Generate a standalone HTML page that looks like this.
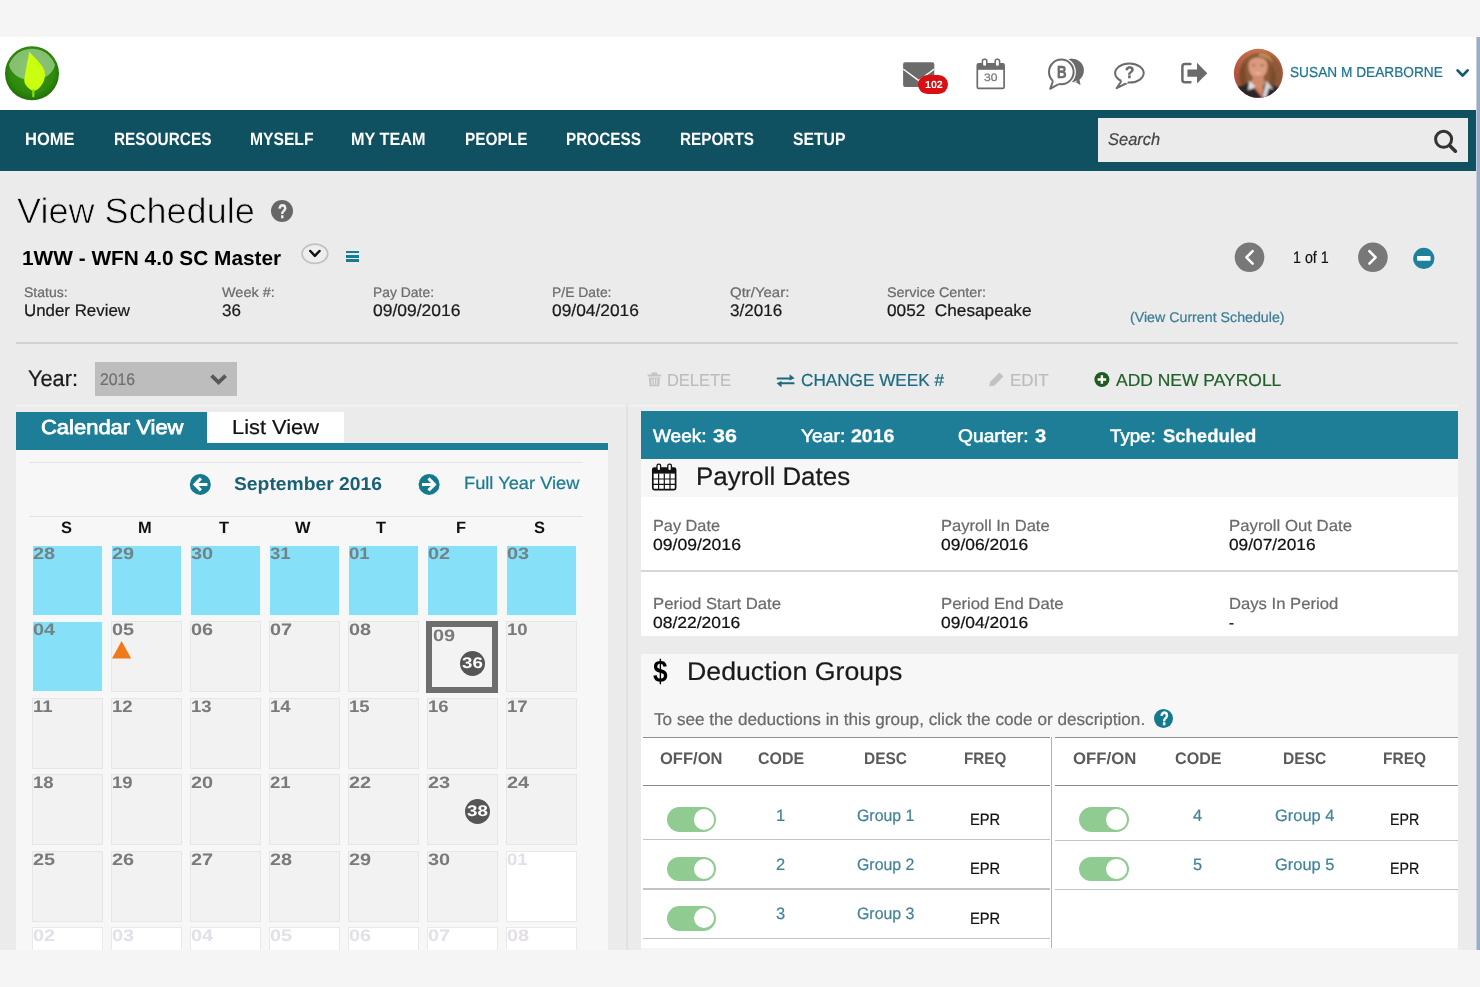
<!DOCTYPE html>
<html><head><meta charset="utf-8"><title>View Schedule</title>
<style>
html,body{margin:0;padding:0;}
body{width:1480px;height:987px;overflow:hidden;background:#f5f5f5;position:relative;font-family:"Liberation Sans",sans-serif;}
#p div,#p span,#p svg{position:absolute;}
#p span{white-space:pre;line-height:1;transform-origin:0 0;display:block;text-rendering:geometricPrecision;}
#p{position:absolute;left:0;top:0;width:1480px;height:987px;overflow:hidden;}
</style></head><body><div id="p">
<div style="left:0.0px;top:37.0px;width:1476.0px;height:72.5px;background:#ffffff;"></div>
<div style="left:0.0px;top:109.5px;width:1476.0px;height:61.5px;background:#0f5061;"></div>
<div style="left:0.0px;top:171.0px;width:1476.0px;height:779.0px;background:#ebebeb;"></div>
<div style="left:1476.0px;top:37.0px;width:4.0px;height:913.0px;background:#9aadc8;"></div>
<div style="left:1475.6px;top:37.0px;width:0.8px;height:913.0px;background:#c3cddd;"></div>
<span style="left:24.70px;top:131px;font-size:17.9px;color:#ffffff;transform:scaleX(0.9236);font-weight:bold;">HOME</span>
<span style="left:113.50px;top:131px;font-size:17.9px;color:#ffffff;transform:scaleX(0.8598);font-weight:bold;">RESOURCES</span>
<span style="left:250.00px;top:131px;font-size:17.9px;color:#ffffff;transform:scaleX(0.8748);font-weight:bold;">MYSELF</span>
<span style="left:351.00px;top:131px;font-size:17.9px;color:#ffffff;transform:scaleX(0.9082);font-weight:bold;">MY TEAM</span>
<span style="left:464.50px;top:131px;font-size:17.9px;color:#ffffff;transform:scaleX(0.8611);font-weight:bold;">PEOPLE</span>
<span style="left:566.00px;top:131px;font-size:17.9px;color:#ffffff;transform:scaleX(0.8568);font-weight:bold;">PROCESS</span>
<span style="left:680.00px;top:131px;font-size:17.9px;color:#ffffff;transform:scaleX(0.8550);font-weight:bold;">REPORTS</span>
<span style="left:793.00px;top:131px;font-size:17.9px;color:#ffffff;transform:scaleX(0.8794);font-weight:bold;">SETUP</span>
<div style="left:1098.0px;top:118.0px;width:370.2px;height:44.0px;background:#ebebeb;"></div>
<span style="left:1108.40px;top:131px;font-size:17.0px;color:#444;transform:scaleX(0.9686);-webkit-text-stroke:0.22px;font-style:italic;">Search</span>
<span style="left:16.60px;top:194px;font-size:35.6px;color:#000;transform:scaleX(1.0129);-webkit-text-stroke:0.75px #ebebeb;">View Schedule</span>
<span style="left:21.60px;top:249px;font-size:20.3px;color:#000;transform:scaleX(1.0268);font-weight:bold;">1WW - WFN 4.0 SC Master</span>
<span style="left:24.30px;top:286px;font-size:13.8px;color:#6b6b6b;transform:scaleX(1.0166);-webkit-text-stroke:0.22px;">Status:</span>
<span style="left:24.30px;top:303px;font-size:16.7px;color:#1a1a1a;transform:scaleX(1.0118);-webkit-text-stroke:0.22px;">Under Review</span>
<span style="left:221.60px;top:286px;font-size:13.8px;color:#6b6b6b;transform:scaleX(1.0463);-webkit-text-stroke:0.22px;">Week #:</span>
<span style="left:221.60px;top:303px;font-size:16.7px;color:#1a1a1a;transform:scaleX(1.0196);-webkit-text-stroke:0.22px;">36</span>
<span style="left:373.00px;top:286px;font-size:13.8px;color:#6b6b6b;transform:scaleX(1.0069);-webkit-text-stroke:0.22px;">Pay Date:</span>
<span style="left:373.00px;top:303px;font-size:16.7px;color:#1a1a1a;transform:scaleX(1.0469);-webkit-text-stroke:0.22px;">09/09/2016</span>
<span style="left:551.50px;top:286px;font-size:13.8px;color:#6b6b6b;transform:scaleX(1.0074);-webkit-text-stroke:0.22px;">P/E Date:</span>
<span style="left:551.50px;top:303px;font-size:16.7px;color:#1a1a1a;transform:scaleX(1.0409);-webkit-text-stroke:0.22px;">09/04/2016</span>
<span style="left:729.70px;top:286px;font-size:13.8px;color:#6b6b6b;transform:scaleX(1.0838);-webkit-text-stroke:0.22px;">Qtr/Year:</span>
<span style="left:729.70px;top:303px;font-size:16.7px;color:#1a1a1a;transform:scaleX(1.0234);-webkit-text-stroke:0.22px;">3/2016</span>
<span style="left:887.00px;top:286px;font-size:13.8px;color:#6b6b6b;transform:scaleX(1.0412);-webkit-text-stroke:0.22px;">Service Center:</span>
<span style="left:887.00px;top:303px;font-size:16.7px;color:#1a1a1a;transform:scaleX(1.0314);-webkit-text-stroke:0.22px;">0052  Chesapeake</span>
<span style="left:1129.70px;top:310px;font-size:14.1px;color:#3a7c96;transform:scaleX(1.0082);-webkit-text-stroke:0.22px;">(View Current Schedule)</span>
<span style="left:1292.70px;top:250px;font-size:16.7px;color:#111;transform:scaleX(0.8551);-webkit-text-stroke:0.22px;">1 of 1</span>
<div style="left:16.0px;top:341.5px;width:1442.0px;height:2.0px;background:#d2d2d2;"></div>
<span style="left:28.40px;top:368px;font-size:22.5px;color:#1a1a1a;transform:scaleX(0.9662);-webkit-text-stroke:0.22px;">Year:</span>
<div style="left:95.0px;top:362.4px;width:141.8px;height:33.8px;background:#bdbdbd;"></div>
<span style="left:100.00px;top:372px;font-size:16.9px;color:#6f6f6f;transform:scaleX(0.9308);-webkit-text-stroke:0.22px;">2016</span>
<div style="left:16.0px;top:405.0px;width:1442.0px;height:2.0px;background:#f1f1f1;"></div>
<div style="left:626.2px;top:405.0px;width:1.6px;height:545.0px;background:#e2e2e2;"></div>
<span style="left:667.00px;top:372px;font-size:17.4px;color:#bcbcbc;transform:scaleX(0.9455);-webkit-text-stroke:0.22px;">DELETE</span>
<span style="left:800.60px;top:372px;font-size:17.4px;color:#1c6b80;transform:scaleX(0.9860);-webkit-text-stroke:0.22px;">CHANGE WEEK #</span>
<span style="left:1010.00px;top:372px;font-size:17.4px;color:#bcbcbc;transform:scaleX(0.9730);-webkit-text-stroke:0.22px;">EDIT</span>
<span style="left:1115.60px;top:372px;font-size:17.4px;color:#20602a;transform:scaleX(1.0043);-webkit-text-stroke:0.22px;">ADD NEW PAYROLL</span>
<div style="left:16.0px;top:443.4px;width:591.6px;height:506.6px;background:#f7f7f7;"></div>
<div style="left:16.0px;top:411.6px;width:191.0px;height:38.0px;background:#1e7e98;"></div>
<div style="left:207.0px;top:411.6px;width:136.8px;height:31.8px;background:#ffffff;"></div>
<div style="left:16.0px;top:443.4px;width:591.6px;height:6.2px;background:#1e7e98;"></div>
<span style="left:40.50px;top:418px;font-size:20.3px;color:#fff;transform:scaleX(1.0831);-webkit-text-stroke:0.75px #fff;">Calendar View</span>
<span style="left:232.00px;top:418px;font-size:20.3px;color:#111;transform:scaleX(1.0755);-webkit-text-stroke:0.22px;">List View</span>
<div style="left:28.5px;top:462.0px;width:554.0px;height:1.2px;background:#e4e4e4;"></div>
<div style="left:28.5px;top:516.3px;width:554.0px;height:1.2px;background:#e4e4e4;"></div>
<span style="left:234.00px;top:475px;font-size:18.5px;color:#1a5f73;transform:scaleX(1.0430);font-weight:bold;">September 2016</span>
<span style="left:464.00px;top:475px;font-size:17.7px;color:#1b7a94;transform:scaleX(1.0325);-webkit-text-stroke:0.22px;">Full Year View</span>
<span style="left:60.74px;top:520px;font-size:16.4px;color:#111;transform:scaleX(1.0015);font-weight:bold;">S</span>
<span style="left:138.44px;top:520px;font-size:16.4px;color:#111;transform:scaleX(1.0015);font-weight:bold;">M</span>
<span style="left:218.59px;top:520px;font-size:16.4px;color:#111;transform:scaleX(1.0015);font-weight:bold;">T</span>
<span style="left:294.94px;top:520px;font-size:16.4px;color:#111;transform:scaleX(1.0015);font-weight:bold;">W</span>
<span style="left:376.39px;top:520px;font-size:16.4px;color:#111;transform:scaleX(1.0015);font-weight:bold;">T</span>
<span style="left:455.99px;top:520px;font-size:16.4px;color:#111;transform:scaleX(1.0015);font-weight:bold;">F</span>
<span style="left:534.24px;top:520px;font-size:16.4px;color:#111;transform:scaleX(1.0015);font-weight:bold;">S</span>
<div style="left:32.3px;top:544.8px;width:70.8px;height:71.2px;background:#86e1f8;box-sizing:border-box;border:1px solid #f1f8fa;"></div>
<span style="left:33.00px;top:546px;font-size:16.6px;color:#718389;transform:scaleX(1.1978);font-weight:bold;">28</span>
<div style="left:111.2px;top:544.8px;width:70.8px;height:71.2px;background:#86e1f8;box-sizing:border-box;border:1px solid #f1f8fa;"></div>
<span style="left:111.93px;top:546px;font-size:16.6px;color:#718389;transform:scaleX(1.1978);font-weight:bold;">29</span>
<div style="left:190.2px;top:544.8px;width:70.8px;height:71.2px;background:#86e1f8;box-sizing:border-box;border:1px solid #f1f8fa;"></div>
<span style="left:190.86px;top:546px;font-size:16.6px;color:#718389;transform:scaleX(1.1978);font-weight:bold;">30</span>
<div style="left:269.1px;top:544.8px;width:70.8px;height:71.2px;background:#86e1f8;box-sizing:border-box;border:1px solid #f1f8fa;"></div>
<span style="left:269.79px;top:546px;font-size:16.6px;color:#718389;transform:scaleX(1.1180);font-weight:bold;">31</span>
<div style="left:348.0px;top:544.8px;width:70.8px;height:71.2px;background:#86e1f8;box-sizing:border-box;border:1px solid #f1f8fa;"></div>
<span style="left:348.72px;top:546px;font-size:16.6px;color:#718389;transform:scaleX(1.1180);font-weight:bold;">01</span>
<div style="left:427.0px;top:544.8px;width:70.8px;height:71.2px;background:#86e1f8;box-sizing:border-box;border:1px solid #f1f8fa;"></div>
<span style="left:427.65px;top:546px;font-size:16.6px;color:#718389;transform:scaleX(1.1978);font-weight:bold;">02</span>
<div style="left:505.9px;top:544.8px;width:70.8px;height:71.2px;background:#86e1f8;box-sizing:border-box;border:1px solid #f1f8fa;"></div>
<span style="left:506.58px;top:546px;font-size:16.6px;color:#718389;transform:scaleX(1.1978);font-weight:bold;">03</span>
<div style="left:32.3px;top:621.2px;width:70.8px;height:71.2px;background:#86e1f8;box-sizing:border-box;border:1px solid #f1f8fa;"></div>
<span style="left:33.00px;top:622px;font-size:16.6px;color:#718389;transform:scaleX(1.1978);font-weight:bold;">04</span>
<div style="left:111.2px;top:621.2px;width:70.8px;height:71.2px;background:#f2f2f2;box-sizing:border-box;border:1px solid #e6e6e6;"></div>
<span style="left:111.93px;top:622px;font-size:16.6px;color:#7a7a7a;transform:scaleX(1.1978);font-weight:bold;">05</span>
<div style="left:190.2px;top:621.2px;width:70.8px;height:71.2px;background:#f2f2f2;box-sizing:border-box;border:1px solid #e6e6e6;"></div>
<span style="left:190.86px;top:622px;font-size:16.6px;color:#7a7a7a;transform:scaleX(1.1978);font-weight:bold;">06</span>
<div style="left:269.1px;top:621.2px;width:70.8px;height:71.2px;background:#f2f2f2;box-sizing:border-box;border:1px solid #e6e6e6;"></div>
<span style="left:269.79px;top:622px;font-size:16.6px;color:#7a7a7a;transform:scaleX(1.1978);font-weight:bold;">07</span>
<div style="left:348.0px;top:621.2px;width:70.8px;height:71.2px;background:#f2f2f2;box-sizing:border-box;border:1px solid #e6e6e6;"></div>
<span style="left:348.72px;top:622px;font-size:16.6px;color:#7a7a7a;transform:scaleX(1.1978);font-weight:bold;">08</span>
<div style="left:426.0px;top:621.0px;width:72.0px;height:72.0px;background:#f3f3f3;box-sizing:border-box;border:6px solid #6e6e6e;"></div>
<span style="left:432.80px;top:628px;font-size:16.6px;color:#7a7a7a;transform:scaleX(1.1978);font-weight:bold;">09</span>
<div style="left:505.9px;top:621.2px;width:70.8px;height:71.2px;background:#f2f2f2;box-sizing:border-box;border:1px solid #e6e6e6;"></div>
<span style="left:506.58px;top:622px;font-size:16.6px;color:#7a7a7a;transform:scaleX(1.1180);font-weight:bold;">10</span>
<div style="left:32.3px;top:697.7px;width:70.8px;height:71.2px;background:#f2f2f2;box-sizing:border-box;border:1px solid #e6e6e6;"></div>
<span style="left:33.00px;top:699px;font-size:16.6px;color:#7a7a7a;transform:scaleX(1.1180);font-weight:bold;">11</span>
<div style="left:111.2px;top:697.7px;width:70.8px;height:71.2px;background:#f2f2f2;box-sizing:border-box;border:1px solid #e6e6e6;"></div>
<span style="left:111.93px;top:699px;font-size:16.6px;color:#7a7a7a;transform:scaleX(1.1180);font-weight:bold;">12</span>
<div style="left:190.2px;top:697.7px;width:70.8px;height:71.2px;background:#f2f2f2;box-sizing:border-box;border:1px solid #e6e6e6;"></div>
<span style="left:190.86px;top:699px;font-size:16.6px;color:#7a7a7a;transform:scaleX(1.1180);font-weight:bold;">13</span>
<div style="left:269.1px;top:697.7px;width:70.8px;height:71.2px;background:#f2f2f2;box-sizing:border-box;border:1px solid #e6e6e6;"></div>
<span style="left:269.79px;top:699px;font-size:16.6px;color:#7a7a7a;transform:scaleX(1.1180);font-weight:bold;">14</span>
<div style="left:348.0px;top:697.7px;width:70.8px;height:71.2px;background:#f2f2f2;box-sizing:border-box;border:1px solid #e6e6e6;"></div>
<span style="left:348.72px;top:699px;font-size:16.6px;color:#7a7a7a;transform:scaleX(1.1180);font-weight:bold;">15</span>
<div style="left:427.0px;top:697.7px;width:70.8px;height:71.2px;background:#f2f2f2;box-sizing:border-box;border:1px solid #e6e6e6;"></div>
<span style="left:427.65px;top:699px;font-size:16.6px;color:#7a7a7a;transform:scaleX(1.1180);font-weight:bold;">16</span>
<div style="left:505.9px;top:697.7px;width:70.8px;height:71.2px;background:#f2f2f2;box-sizing:border-box;border:1px solid #e6e6e6;"></div>
<span style="left:506.58px;top:699px;font-size:16.6px;color:#7a7a7a;transform:scaleX(1.1180);font-weight:bold;">17</span>
<div style="left:32.3px;top:774.1px;width:70.8px;height:71.2px;background:#f2f2f2;box-sizing:border-box;border:1px solid #e6e6e6;"></div>
<span style="left:33.00px;top:775px;font-size:16.6px;color:#7a7a7a;transform:scaleX(1.1180);font-weight:bold;">18</span>
<div style="left:111.2px;top:774.1px;width:70.8px;height:71.2px;background:#f2f2f2;box-sizing:border-box;border:1px solid #e6e6e6;"></div>
<span style="left:111.93px;top:775px;font-size:16.6px;color:#7a7a7a;transform:scaleX(1.1180);font-weight:bold;">19</span>
<div style="left:190.2px;top:774.1px;width:70.8px;height:71.2px;background:#f2f2f2;box-sizing:border-box;border:1px solid #e6e6e6;"></div>
<span style="left:190.86px;top:775px;font-size:16.6px;color:#7a7a7a;transform:scaleX(1.1978);font-weight:bold;">20</span>
<div style="left:269.1px;top:774.1px;width:70.8px;height:71.2px;background:#f2f2f2;box-sizing:border-box;border:1px solid #e6e6e6;"></div>
<span style="left:269.79px;top:775px;font-size:16.6px;color:#7a7a7a;transform:scaleX(1.1180);font-weight:bold;">21</span>
<div style="left:348.0px;top:774.1px;width:70.8px;height:71.2px;background:#f2f2f2;box-sizing:border-box;border:1px solid #e6e6e6;"></div>
<span style="left:348.72px;top:775px;font-size:16.6px;color:#7a7a7a;transform:scaleX(1.1978);font-weight:bold;">22</span>
<div style="left:427.0px;top:774.1px;width:70.8px;height:71.2px;background:#f2f2f2;box-sizing:border-box;border:1px solid #e6e6e6;"></div>
<span style="left:427.65px;top:775px;font-size:16.6px;color:#7a7a7a;transform:scaleX(1.1978);font-weight:bold;">23</span>
<div style="left:505.9px;top:774.1px;width:70.8px;height:71.2px;background:#f2f2f2;box-sizing:border-box;border:1px solid #e6e6e6;"></div>
<span style="left:506.58px;top:775px;font-size:16.6px;color:#7a7a7a;transform:scaleX(1.1978);font-weight:bold;">24</span>
<div style="left:32.3px;top:850.6px;width:70.8px;height:71.2px;background:#f2f2f2;box-sizing:border-box;border:1px solid #e6e6e6;"></div>
<span style="left:33.00px;top:852px;font-size:16.6px;color:#7a7a7a;transform:scaleX(1.1978);font-weight:bold;">25</span>
<div style="left:111.2px;top:850.6px;width:70.8px;height:71.2px;background:#f2f2f2;box-sizing:border-box;border:1px solid #e6e6e6;"></div>
<span style="left:111.93px;top:852px;font-size:16.6px;color:#7a7a7a;transform:scaleX(1.1978);font-weight:bold;">26</span>
<div style="left:190.2px;top:850.6px;width:70.8px;height:71.2px;background:#f2f2f2;box-sizing:border-box;border:1px solid #e6e6e6;"></div>
<span style="left:190.86px;top:852px;font-size:16.6px;color:#7a7a7a;transform:scaleX(1.1978);font-weight:bold;">27</span>
<div style="left:269.1px;top:850.6px;width:70.8px;height:71.2px;background:#f2f2f2;box-sizing:border-box;border:1px solid #e6e6e6;"></div>
<span style="left:269.79px;top:852px;font-size:16.6px;color:#7a7a7a;transform:scaleX(1.1978);font-weight:bold;">28</span>
<div style="left:348.0px;top:850.6px;width:70.8px;height:71.2px;background:#f2f2f2;box-sizing:border-box;border:1px solid #e6e6e6;"></div>
<span style="left:348.72px;top:852px;font-size:16.6px;color:#7a7a7a;transform:scaleX(1.1978);font-weight:bold;">29</span>
<div style="left:427.0px;top:850.6px;width:70.8px;height:71.2px;background:#f2f2f2;box-sizing:border-box;border:1px solid #e6e6e6;"></div>
<span style="left:427.65px;top:852px;font-size:16.6px;color:#7a7a7a;transform:scaleX(1.1978);font-weight:bold;">30</span>
<div style="left:505.9px;top:850.6px;width:70.8px;height:71.2px;background:#ffffff;box-sizing:border-box;border:1px solid #e9e9e9;"></div>
<span style="left:506.58px;top:852px;font-size:16.6px;color:#e3dfe8;transform:scaleX(1.1180);font-weight:bold;">01</span>
<div style="left:32.3px;top:927.0px;width:70.8px;height:71.2px;background:#ffffff;box-sizing:border-box;border:1px solid #e9e9e9;"></div>
<span style="left:33.00px;top:928px;font-size:16.6px;color:#e3dfe8;transform:scaleX(1.1978);font-weight:bold;">02</span>
<div style="left:111.2px;top:927.0px;width:70.8px;height:71.2px;background:#ffffff;box-sizing:border-box;border:1px solid #e9e9e9;"></div>
<span style="left:111.93px;top:928px;font-size:16.6px;color:#e3dfe8;transform:scaleX(1.1978);font-weight:bold;">03</span>
<div style="left:190.2px;top:927.0px;width:70.8px;height:71.2px;background:#ffffff;box-sizing:border-box;border:1px solid #e9e9e9;"></div>
<span style="left:190.86px;top:928px;font-size:16.6px;color:#e3dfe8;transform:scaleX(1.1978);font-weight:bold;">04</span>
<div style="left:269.1px;top:927.0px;width:70.8px;height:71.2px;background:#ffffff;box-sizing:border-box;border:1px solid #e9e9e9;"></div>
<span style="left:269.79px;top:928px;font-size:16.6px;color:#e3dfe8;transform:scaleX(1.1978);font-weight:bold;">05</span>
<div style="left:348.0px;top:927.0px;width:70.8px;height:71.2px;background:#ffffff;box-sizing:border-box;border:1px solid #e9e9e9;"></div>
<span style="left:348.72px;top:928px;font-size:16.6px;color:#e3dfe8;transform:scaleX(1.1978);font-weight:bold;">06</span>
<div style="left:427.0px;top:927.0px;width:70.8px;height:71.2px;background:#ffffff;box-sizing:border-box;border:1px solid #e9e9e9;"></div>
<span style="left:427.65px;top:928px;font-size:16.6px;color:#e3dfe8;transform:scaleX(1.1978);font-weight:bold;">07</span>
<div style="left:505.9px;top:927.0px;width:70.8px;height:71.2px;background:#ffffff;box-sizing:border-box;border:1px solid #e9e9e9;"></div>
<span style="left:506.58px;top:928px;font-size:16.6px;color:#e3dfe8;transform:scaleX(1.1978);font-weight:bold;">08</span>
<svg style="left:112.4px;top:641.3px;" width="19.2" height="17.4" viewBox="0 0 19.2 17.4"><path d="M9.6 0 L19.2 17.4 L0 17.4 Z" fill="#f07a1a"/></svg>
<div style="left:459.5px;top:650.6px;width:25.4px;height:25.4px;background:#555;border-radius:50%;"></div>
<span style="left:461.80px;top:656px;font-size:15.4px;color:#fff;transform:scaleX(1.2168);font-weight:bold;">36</span>
<div style="left:464.9px;top:798.8px;width:25.4px;height:25.4px;background:#555;border-radius:50%;"></div>
<span style="left:467.20px;top:804px;font-size:15.4px;color:#fff;transform:scaleX(1.2168);font-weight:bold;">38</span>
<div style="left:641.0px;top:411.2px;width:817.0px;height:48.0px;background:#1e7e98;"></div>
<span style="left:653.40px;top:427px;font-size:18.2px;color:#fff;transform:scaleX(1.0442);-webkit-text-stroke:0.55px #fff;">Week:</span>
<span style="left:713.00px;top:427px;font-size:18.2px;color:#fff;transform:scaleX(1.1781);font-weight:bold;-webkit-text-stroke:0.3px #fff;">36</span>
<span style="left:800.60px;top:427px;font-size:18.2px;color:#fff;transform:scaleX(1.0583);-webkit-text-stroke:0.55px #fff;">Year:</span>
<span style="left:851.20px;top:427px;font-size:18.2px;color:#fff;transform:scaleX(1.0742);font-weight:bold;-webkit-text-stroke:0.3px #fff;">2016</span>
<span style="left:957.50px;top:427px;font-size:18.2px;color:#fff;transform:scaleX(1.0570);-webkit-text-stroke:0.55px #fff;">Quarter:</span>
<span style="left:1034.90px;top:427px;font-size:18.2px;color:#fff;transform:scaleX(1.1088);font-weight:bold;-webkit-text-stroke:0.3px #fff;">3</span>
<span style="left:1110.30px;top:427px;font-size:18.2px;color:#fff;transform:scaleX(1.0270);-webkit-text-stroke:0.55px #fff;">Type:</span>
<span style="left:1163.40px;top:427px;font-size:18.2px;color:#fff;transform:scaleX(1.0152);font-weight:bold;-webkit-text-stroke:0.3px #fff;">Scheduled</span>
<div style="left:641.0px;top:459.2px;width:817.0px;height:38.2px;background:#f7f7f7;"></div>
<span style="left:696.40px;top:465px;font-size:25.4px;color:#1a1a1a;transform:scaleX(1.0205);-webkit-text-stroke:0.22px;">Payroll Dates</span>
<div style="left:641.0px;top:497.4px;width:817.0px;height:138.6px;background:#ffffff;"></div>
<div style="left:641.0px;top:569.8px;width:817.0px;height:2.2px;background:#d6d6d6;"></div>
<span style="left:653.00px;top:519px;font-size:16.0px;color:#6a6a6a;transform:scaleX(1.0176);-webkit-text-stroke:0.22px;">Pay Date</span>
<span style="left:653.00px;top:538px;font-size:16.0px;color:#111;transform:scaleX(1.0977);-webkit-text-stroke:0.22px;">09/09/2016</span>
<span style="left:653.00px;top:597px;font-size:16.0px;color:#6a6a6a;transform:scaleX(1.0430);-webkit-text-stroke:0.22px;">Period Start Date</span>
<span style="left:653.00px;top:616px;font-size:16.0px;color:#111;transform:scaleX(1.0902);-webkit-text-stroke:0.22px;">08/22/2016</span>
<span style="left:941.30px;top:519px;font-size:16.0px;color:#6a6a6a;transform:scaleX(1.0356);-webkit-text-stroke:0.22px;">Payroll In Date</span>
<span style="left:941.30px;top:538px;font-size:16.0px;color:#111;transform:scaleX(1.0889);-webkit-text-stroke:0.22px;">09/06/2016</span>
<span style="left:941.30px;top:597px;font-size:16.0px;color:#6a6a6a;transform:scaleX(1.0448);-webkit-text-stroke:0.22px;">Period End Date</span>
<span style="left:941.30px;top:616px;font-size:16.0px;color:#111;transform:scaleX(1.0889);-webkit-text-stroke:0.22px;">09/04/2016</span>
<span style="left:1229.00px;top:519px;font-size:16.0px;color:#6a6a6a;transform:scaleX(1.0481);-webkit-text-stroke:0.22px;">Payroll Out Date</span>
<span style="left:1229.00px;top:538px;font-size:16.0px;color:#111;transform:scaleX(1.0802);-webkit-text-stroke:0.22px;">09/07/2016</span>
<span style="left:1229.00px;top:597px;font-size:16.0px;color:#6a6a6a;transform:scaleX(1.0404);-webkit-text-stroke:0.22px;">Days In Period</span>
<span style="left:1229.00px;top:616px;font-size:16.0px;color:#111;transform:scaleX(0.9328);-webkit-text-stroke:0.22px;">-</span>
<div style="left:641.0px;top:653.8px;width:817.0px;height:84.0px;background:#f7f7f7;"></div>
<div style="left:641.0px;top:737.0px;width:817.0px;height:213.0px;background:#ffffff;"></div>
<span style="left:653.20px;top:656px;font-size:31.2px;color:#000;transform:scaleX(0.8432);font-weight:bold;">$</span>
<span style="left:687.30px;top:660px;font-size:25.6px;color:#1a1a1a;transform:scaleX(1.0439);-webkit-text-stroke:0.22px;">Deduction Groups</span>
<span style="left:653.50px;top:711px;font-size:17.0px;color:#6a6a6a;transform:scaleX(1.0092);-webkit-text-stroke:0.22px;">To see the deductions in this group, click the code or description.</span>
<div style="left:643.4px;top:736.6px;width:407.0px;height:1.7px;background:#909090;"></div>
<div style="left:1055.0px;top:736.6px;width:402.8px;height:1.7px;background:#909090;"></div>
<div style="left:643.4px;top:784.6px;width:407.0px;height:1.9px;background:#8a8a8a;"></div>
<div style="left:1055.0px;top:784.6px;width:402.8px;height:1.9px;background:#8a8a8a;"></div>
<div style="left:1050.8px;top:737.0px;width:1.3px;height:213.0px;background:#b4b4b4;"></div>
<div style="left:643.4px;top:838.9px;width:407.0px;height:1.2px;background:#c4c4c4;"></div>
<div style="left:643.4px;top:888.4px;width:407.0px;height:1.2px;background:#c4c4c4;"></div>
<div style="left:643.4px;top:937.9px;width:407.0px;height:1.2px;background:#c4c4c4;"></div>
<div style="left:1055.0px;top:839.5px;width:402.8px;height:1.2px;background:#c4c4c4;"></div>
<div style="left:1055.0px;top:889.0px;width:402.8px;height:1.2px;background:#c4c4c4;"></div>
<span style="left:660.40px;top:751px;font-size:16.7px;color:#5a5a5a;transform:scaleX(0.9914);font-weight:bold;">OFF/ON</span>
<span style="left:757.80px;top:751px;font-size:16.7px;color:#5a5a5a;transform:scaleX(0.9573);font-weight:bold;">CODE</span>
<span style="left:863.60px;top:751px;font-size:16.7px;color:#5a5a5a;transform:scaleX(0.9284);font-weight:bold;">DESC</span>
<span style="left:964.30px;top:751px;font-size:16.7px;color:#5a5a5a;transform:scaleX(0.9111);font-weight:bold;">FREQ</span>
<span style="left:1072.70px;top:751px;font-size:16.7px;color:#5a5a5a;transform:scaleX(1.0041);font-weight:bold;">OFF/ON</span>
<span style="left:1174.70px;top:751px;font-size:16.7px;color:#5a5a5a;transform:scaleX(0.9655);font-weight:bold;">CODE</span>
<span style="left:1282.90px;top:751px;font-size:16.7px;color:#5a5a5a;transform:scaleX(0.9348);font-weight:bold;">DESC</span>
<span style="left:1382.70px;top:751px;font-size:16.7px;color:#5a5a5a;transform:scaleX(0.9305);font-weight:bold;">FREQ</span>
<div style="left:666.5px;top:807.2px;width:49.4px;height:24.8px;background:#90cb92;border-radius:12.4px;"></div>
<div style="left:693.5px;top:809.4px;width:20.4px;height:20.4px;background:#fff;border-radius:50%;"></div>
<span style="left:776.44px;top:808px;font-size:16.4px;color:#43839a;transform:scaleX(1.0015);-webkit-text-stroke:0.22px;">1</span>
<span style="left:856.50px;top:808px;font-size:16.4px;color:#43839a;transform:scaleX(0.9699);-webkit-text-stroke:0.22px;">Group 1</span>
<span style="left:970.40px;top:812px;font-size:16.4px;color:#111;transform:scaleX(0.8961);-webkit-text-stroke:0.22px;">EPR</span>
<div style="left:666.5px;top:856.5px;width:49.4px;height:24.8px;background:#90cb92;border-radius:12.4px;"></div>
<div style="left:693.5px;top:858.7px;width:20.4px;height:20.4px;background:#fff;border-radius:50%;"></div>
<span style="left:776.44px;top:857px;font-size:16.4px;color:#43839a;transform:scaleX(1.0015);-webkit-text-stroke:0.22px;">2</span>
<span style="left:856.50px;top:857px;font-size:16.4px;color:#43839a;transform:scaleX(0.9699);-webkit-text-stroke:0.22px;">Group 2</span>
<span style="left:970.40px;top:861px;font-size:16.4px;color:#111;transform:scaleX(0.8961);-webkit-text-stroke:0.22px;">EPR</span>
<div style="left:666.5px;top:905.9px;width:49.4px;height:24.8px;background:#90cb92;border-radius:12.4px;"></div>
<div style="left:693.5px;top:908.1px;width:20.4px;height:20.4px;background:#fff;border-radius:50%;"></div>
<span style="left:776.44px;top:906px;font-size:16.4px;color:#43839a;transform:scaleX(1.0015);-webkit-text-stroke:0.22px;">3</span>
<span style="left:856.50px;top:906px;font-size:16.4px;color:#43839a;transform:scaleX(0.9699);-webkit-text-stroke:0.22px;">Group 3</span>
<span style="left:970.40px;top:911px;font-size:16.4px;color:#111;transform:scaleX(0.8961);-webkit-text-stroke:0.22px;">EPR</span>
<div style="left:1079.3px;top:807.2px;width:49.4px;height:24.8px;background:#90cb92;border-radius:12.4px;"></div>
<div style="left:1106.3px;top:809.4px;width:20.4px;height:20.4px;background:#fff;border-radius:50%;"></div>
<span style="left:1193.44px;top:808px;font-size:16.4px;color:#43839a;transform:scaleX(1.0015);-webkit-text-stroke:0.22px;">4</span>
<span style="left:1274.80px;top:808px;font-size:16.4px;color:#43839a;transform:scaleX(1.0036);-webkit-text-stroke:0.22px;">Group 4</span>
<span style="left:1389.90px;top:812px;font-size:16.4px;color:#111;transform:scaleX(0.8694);-webkit-text-stroke:0.22px;">EPR</span>
<div style="left:1079.3px;top:856.5px;width:49.4px;height:24.8px;background:#90cb92;border-radius:12.4px;"></div>
<div style="left:1106.3px;top:858.7px;width:20.4px;height:20.4px;background:#fff;border-radius:50%;"></div>
<span style="left:1193.44px;top:857px;font-size:16.4px;color:#43839a;transform:scaleX(1.0015);-webkit-text-stroke:0.22px;">5</span>
<span style="left:1274.80px;top:857px;font-size:16.4px;color:#43839a;transform:scaleX(1.0036);-webkit-text-stroke:0.22px;">Group 5</span>
<span style="left:1389.90px;top:861px;font-size:16.4px;color:#111;transform:scaleX(0.8694);-webkit-text-stroke:0.22px;">EPR</span>
<svg style="left:4.0px;top:45.0px;" width="56.0" height="57.0" viewBox="4 45 56 57"><defs><radialGradient id="lg" cx="50%" cy="45%" r="55%"><stop offset="0" stop-color="#3f9a14"/><stop offset="0.75" stop-color="#2f8a0c"/><stop offset="1" stop-color="#1f7007"/></radialGradient>
<clipPath id="lc"><circle cx="32" cy="73.3" r="24.6"/></clipPath></defs>
<circle cx="32" cy="73.3" r="27" fill="url(#lg)"/>
<ellipse cx="32" cy="61.5" rx="23.5" ry="19" fill="#b9dfae" opacity="0.62" clip-path="url(#lc)"/>
<path d="M29.2 51.6 C34 58 45.5 66 45 75 C44.5 84 38.5 90 33.4 91.3 C28 88.5 24.3 84.5 24.3 80.5 C25 72 28.2 60 29.2 51.6 Z" fill="#cbff10"/>
<path d="M33.3 90 L33.3 96.3" stroke="#86e012" stroke-width="2.2" stroke-linecap="round"/></svg>
<svg style="left:903.0px;top:62.0px;" width="32.0" height="25.0" viewBox="903 62 32 25"><path d="M905 62.2 H932.3 Q934.3 62.2 934.3 64.2 V84.9 Q934.3 86.9 932.3 86.9 H905 Q903.1 86.9 903.1 84.9 V64.2 Q903.1 62.2 905 62.2 Z" fill="#6b6b6b"/>
<path d="M903.1 69 L918.7 80.5 L934.3 69" fill="none" stroke="#fff" stroke-width="1.5"/></svg>
<div style="left:918.1px;top:74.7px;width:30.4px;height:19.5px;background:#d90f14;border-radius:9.8px;"></div>
<span style="left:924.60px;top:81px;font-size:10.3px;color:#fff;transform:scaleX(1.0348);font-weight:bold;">102</span>
<svg style="left:976.0px;top:58.0px;" width="30.0" height="32.0" viewBox="976 58 30 32"><rect x="977.3" y="63.8" width="26.8" height="24.6" rx="1.5" fill="#fff" stroke="#6b6b6b" stroke-width="1.7"/>
<rect x="977.3" y="63.8" width="26.8" height="6" fill="#6b6b6b"/>
<rect x="982.4" y="59.2" width="4.4" height="7.2" rx="2" fill="#fff" stroke="#6b6b6b" stroke-width="1.5"/>
<rect x="995.2" y="59.2" width="4.4" height="7.2" rx="2" fill="#fff" stroke="#6b6b6b" stroke-width="1.5"/></svg>
<span style="left:984.20px;top:73px;font-size:10.8px;color:#777;transform:scaleX(1.1178);-webkit-text-stroke:0.22px;">30</span>
<svg style="left:1046.0px;top:57.0px;" width="40.0" height="34.0" viewBox="1046 57 40 34"><path d="M1071 58.8 A11.8 11.8 0 1 1 1071 82.3 L1076 82.2 L1080.2 85 L1078.6 80.6 Z" fill="#6b6b6b"/>
<circle cx="1071" cy="70.5" r="11.8" fill="#6b6b6b"/>
<path d="M1076.5 80.5 L1080.6 85.2 L1079.3 79 Z" fill="#6b6b6b"/>
<circle cx="1061.3" cy="71.9" r="14.6" fill="#fff"/>
<circle cx="1061.3" cy="71.9" r="12.3" fill="#fff" stroke="#6b6b6b" stroke-width="2"/>
<path d="M1053 81 L1050.2 88.8 L1058.5 84.2" fill="#fff" stroke="#6b6b6b" stroke-width="2" stroke-linejoin="round"/>
<path d="M1053.8 80.2 L1058.8 83.2" stroke="#fff" stroke-width="2.6"/></svg>
<span style="left:1056.60px;top:64px;font-size:17.4px;color:#6b6b6b;transform:scaleX(0.7663);font-weight:bold;-webkit-text-stroke:0.5px #6b6b6b;">B</span>
<svg style="left:1112.0px;top:60.0px;" width="35.0" height="31.0" viewBox="1112 60 35 31"><ellipse cx="1129.4" cy="73.1" rx="14.3" ry="9.5" fill="#fff" stroke="#6b6b6b" stroke-width="2"/>
<path d="M1121.5 81 L1116.6 88.2 L1127 83" fill="#fff" stroke="#6b6b6b" stroke-width="2" stroke-linejoin="round"/>
<path d="M1121.8 80 L1127.6 82.2" stroke="#fff" stroke-width="2.8"/></svg>
<span style="left:1124.70px;top:65px;font-size:16.6px;color:#6b6b6b;transform:scaleX(0.9184);font-weight:bold;-webkit-text-stroke:0.5px #6b6b6b;">?</span>
<svg style="left:1179.0px;top:61.0px;" width="30.0" height="24.0" viewBox="1179 61 30 24"><path d="M1190.4 64 H1185 Q1182.4 64 1182.4 66.6 V79.7 Q1182.4 82.3 1185 82.3 H1190.4" fill="none" stroke="#6b6b6b" stroke-width="2.5" stroke-linecap="round"/>
<path d="M1187.4 69.5 H1197 V62.8 L1207.3 73.15 L1197 83.5 V76.8 H1187.4 Z" fill="#6b6b6b"/></svg>
<svg style="left:1233.0px;top:48.0px;" width="51.0" height="51.0" viewBox="1233 48 51 51"><defs><clipPath id="ac"><circle cx="1258.4" cy="73.3" r="24.5"/></clipPath>
<radialGradient id="ab" cx="50%" cy="25%" r="70%"><stop offset="0" stop-color="#cf8458"/><stop offset="0.6" stop-color="#b9553f"/><stop offset="1" stop-color="#a9453a"/></radialGradient>
<filter id="af" x="-10%" y="-10%" width="120%" height="120%"><feGaussianBlur stdDeviation="0.9"/></filter></defs>
<g clip-path="url(#ac)"><rect x="1230" y="45" width="57" height="57" fill="url(#ab)"/>
<g filter="url(#af)">
<path d="M1240 86 C1236 72 1241 56 1256 53 C1270 51 1281 60 1281.5 73 C1282 80 1279 86 1276 89 L1242 89 Z" fill="#8b5a37"/>
<path d="M1259 54 C1266 53 1272 57 1273 63 C1269 58 1264 56 1259 56 Z" fill="#c99a5a"/>
<path d="M1241 84 C1238 76 1240 66 1246 60 C1244 68 1245 78 1248 86 Z" fill="#7a4a2c"/>
<path d="M1270 64 C1276 70 1278 80 1274 88 L1268 86 C1271 80 1271 72 1270 64Z" fill="#7c4c2e"/>
<path d="M1248.5 66 C1248.5 60 1252.5 57.6 1258 57.6 C1263.5 57.6 1267.5 60 1267.5 66 C1267.5 73 1263.5 78.6 1258 78.6 C1252.5 78.6 1248.5 73 1248.5 66 Z" fill="#dc9a7e"/>
<path d="M1253.5 76 L1263 76 L1265.5 84 L1262 97 L1257 90 L1251 83 Z" fill="#d08a6c"/>
<path d="M1232 99 L1232 90 C1238 86 1244 85 1249 82.5 L1262 98 L1264 84 C1270 85 1278 86 1285 90 L1285 99 Z" fill="#2a2527"/>
<path d="M1249.5 80.5 L1255.5 87 L1252.5 88.5 L1248 90 Z" fill="#e3e3e6"/>
<path d="M1266.5 81 L1273.5 89.6 L1269 88 L1266 97.5 L1262.3 97.5 Z" fill="#d9d9de"/>
<path d="M1254 71.8 Q1258 74.2 1262 71.8 Q1258 76 1254 71.8Z" fill="#f3e6e0"/>
<path d="M1252 65.2 h3.2 M1260.6 65.2 h3.2" stroke="#6a4a3c" stroke-width="1.1"/>
</g></g></svg>
<span style="left:1290.30px;top:66px;font-size:14.4px;color:#1a7492;transform:scaleX(0.9506);-webkit-text-stroke:0.22px;">SUSAN M DEARBORNE</span>
<svg style="left:1455.0px;top:67.0px;" width="16.0" height="12.0" viewBox="1455 67 16 12"><path d="M1457.6 70.4 L1462.6 75.6 L1467.6 70.4" fill="none" stroke="#0f5a6e" stroke-width="2.8" stroke-linecap="round" stroke-linejoin="round"/></svg>
<svg style="left:1431.0px;top:127.0px;" width="28.0" height="28.0" viewBox="1431 127 28 28"><circle cx="1443.6" cy="139.3" r="8" fill="none" stroke="#333" stroke-width="3"/><path d="M1449.6 145.4 L1455.4 151.2" stroke="#333" stroke-width="3.6" stroke-linecap="round"/></svg>
<div style="left:271.0px;top:200.3px;width:22.0px;height:22.0px;background:#676767;border-radius:50%;"></div>
<span style="left:277.60px;top:203px;font-size:19.8px;color:#f0f0f0;transform:scaleX(0.7452);font-weight:bold;-webkit-text-stroke:0.4px #f0f0f0;">?</span>
<svg style="left:300.0px;top:242.0px;" width="30.0" height="24.0" viewBox="300 242 30 24"><ellipse cx="314.9" cy="253.8" rx="12.8" ry="9.6" fill="#eeeeee" stroke="#c2c2c2" stroke-width="1.7"/><path d="M310.3 251 L314.9 255.8 L319.5 251" fill="none" stroke="#111" stroke-width="2.5" stroke-linecap="round" stroke-linejoin="round"/></svg>
<div style="left:346.0px;top:250.6px;width:12.8px;height:2.6px;background:#1b7a94;"></div>
<div style="left:346.0px;top:255.0px;width:12.8px;height:2.6px;background:#1b7a94;"></div>
<div style="left:346.0px;top:259.4px;width:12.8px;height:2.6px;background:#1b7a94;"></div>
<svg style="left:1233.0px;top:241.0px;" width="34.0" height="33.0" viewBox="1233 241 34 33"><circle cx="1249.5" cy="257.2" r="14.8" fill="#787878"/><path d="M1252.6 251.2 L1246.4 257.4 L1252.6 263.6" fill="none" stroke="#fff" stroke-width="2.6" stroke-linecap="round" stroke-linejoin="round"/></svg>
<svg style="left:1356.0px;top:241.0px;" width="34.0" height="33.0" viewBox="1356 241 34 33"><circle cx="1372.9" cy="257.2" r="14.8" fill="#787878"/><path d="M1369.4 251.2 L1375.6 257.4 L1369.4 263.6" fill="none" stroke="#fff" stroke-width="2.6" stroke-linecap="round" stroke-linejoin="round"/></svg>
<svg style="left:1412.0px;top:246.0px;" width="24.0" height="24.0" viewBox="1412 246 24 24"><circle cx="1423.8" cy="258.4" r="10.6" fill="#1e809b"/><rect x="1417" y="256.1" width="13.6" height="4.6" rx="1" fill="#fff"/></svg>
<svg style="left:207.0px;top:371.0px;" width="24.0" height="16.0" viewBox="207 371 24 16"><path d="M211.6 375.6 L218.6 382.4 L225.6 375.6" fill="none" stroke="#585858" stroke-width="3.8" stroke-linejoin="miter"/></svg>
<svg style="left:646.0px;top:371.0px;" width="17.0" height="17.0" viewBox="646 371 17 17"><path d="M647.6 374.6 H661.2 V376.4 H647.6 Z M651.6 372.4 H657.2 V374.6 H651.6 Z" fill="#c4c4c4"/>
<path d="M648.8 377.4 H660 L659.2 386.3 H649.6 Z" fill="#c4c4c4"/>
<path d="M652 378.6 V384.8 M654.4 378.6 V384.8 M656.8 378.6 V384.8" stroke="#ebebeb" stroke-width="1"/></svg>
<svg style="left:776.0px;top:373.0px;" width="20.0" height="14.0" viewBox="776 373 20 14"><path d="M776.8 377.4 H789.6 V374.2 L794.6 378.3 L789.6 380.6 V379.4 H776.8 Z" fill="#1b6a80"/>
<path d="M794.4 382.8 H781.6 V386 L776.6 381.9 L781.6 379.6 V380.8 H794.4 Z" fill="#1b6a80" transform="translate(0,1.4)"/></svg>
<svg style="left:988.0px;top:371.0px;" width="17.0" height="17.0" viewBox="988 371 17 17"><path d="M989.3 386.2 L990.2 381.8 L999.4 372.6 L1003.4 376.6 L994.2 385.8 Z" fill="#c2c2c2"/></svg>
<svg style="left:1093.0px;top:371.0px;" width="18.0" height="18.0" viewBox="1093 371 18 18"><circle cx="1101.9" cy="379.5" r="7.5" fill="#1f5a1f"/><path d="M1097.6 379.5 H1106.2 M1101.9 375.2 V383.8" stroke="#fff" stroke-width="2.4"/></svg>
<svg style="left:189.0px;top:472.5px;" width="23.0" height="23.0" viewBox="189 472.5 23 23"><circle cx="200.3" cy="483.9" r="10.5" fill="#14788f"/><path d="M207.4 483.9 H195.6 M200.9 477.9 L194.9 483.9 L200.9 489.9" fill="none" stroke="#fff" stroke-width="3" stroke-linejoin="miter"/></svg>
<svg style="left:418.0px;top:472.5px;" width="23.0" height="23.0" viewBox="418 472.5 23 23"><circle cx="429.1" cy="483.9" r="10.5" fill="#14788f"/><path d="M422 483.9 H433.8 M428.5 477.9 L434.5 483.9 L428.5 489.9" fill="none" stroke="#fff" stroke-width="3" stroke-linejoin="miter"/></svg>
<svg style="left:651.0px;top:463.0px;" width="27.0" height="28.0" viewBox="651 463 27 28"><rect x="652.8" y="468.2" width="22.8" height="21.4" rx="1.5" fill="#fff" stroke="#111" stroke-width="1.7"/>
<rect x="652.8" y="468.2" width="22.8" height="5.4" fill="#111"/>
<path d="M658.6 473.6 V489.6 M664.3 473.6 V489.6 M670 473.6 V489.6 M652.8 479 H675.6 M652.8 484.3 H675.6" stroke="#111" stroke-width="1.2"/>
<rect x="657" y="464.2" width="3.6" height="6.4" rx="1.6" fill="#fff" stroke="#111" stroke-width="1.3"/>
<rect x="667.8" y="464.2" width="3.6" height="6.4" rx="1.6" fill="#fff" stroke="#111" stroke-width="1.3"/></svg>
<div style="left:1154.2px;top:708.7px;width:19.0px;height:19.0px;background:#14788f;border-radius:50%;"></div>
<span style="left:1159.80px;top:710px;font-size:19.2px;color:#fff;transform:scaleX(0.7514);font-weight:bold;-webkit-text-stroke:0.4px #fff;">?</span>
<div style="left:641.0px;top:948.0px;width:817.0px;height:2.0px;background:#f5f5f5;"></div>
<div style="left:0.0px;top:950.0px;width:1480.0px;height:37.0px;background:#f5f5f5;"></div>
<div style="left:0.0px;top:0.0px;width:1480.0px;height:37.0px;background:#f5f5f5;"></div>
</div></body></html>
